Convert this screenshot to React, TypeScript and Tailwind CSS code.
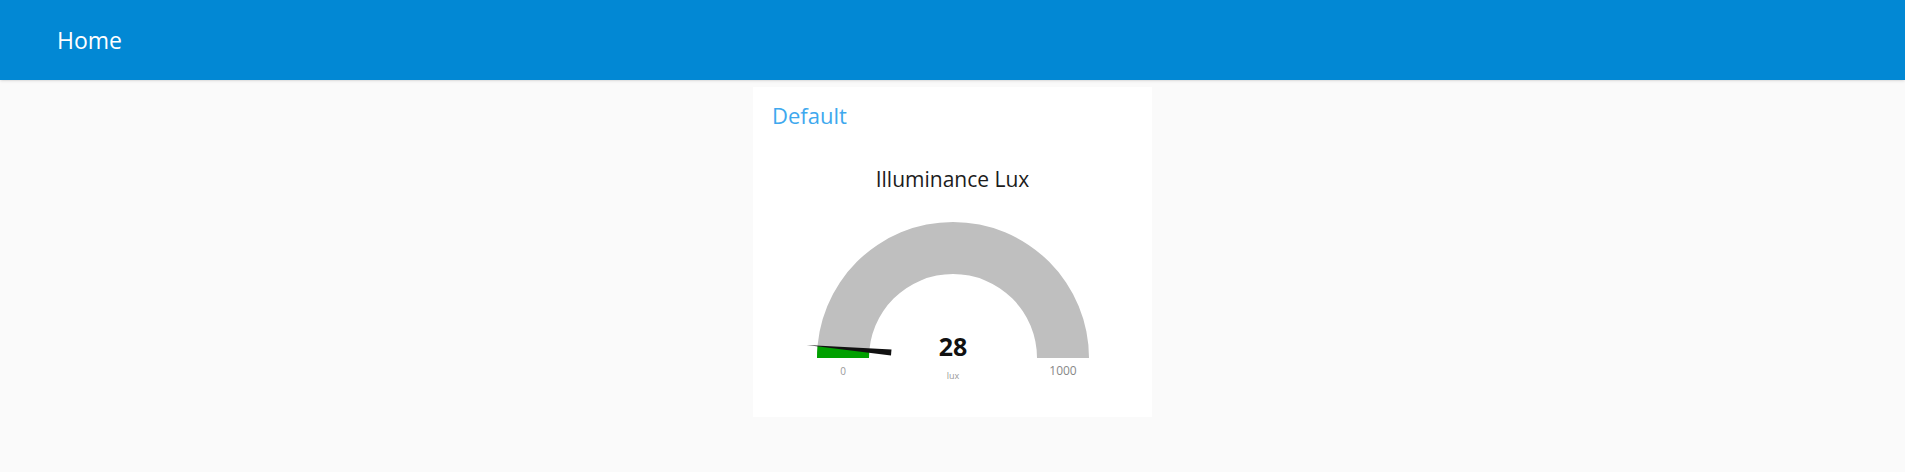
import React from 'react';

const Gauge: React.FC<{ value: number; min: number; max: number; units: string }> = ({ value, min, max, units }) => {
  const cx = 200;
  const cy = 164;
  const ro = 136;
  const ri = 84;
  const a = ((value - min) / (max - min)) * Math.PI;
  const ox = cx - ro * Math.cos(a);
  const oy = cy - ro * Math.sin(a);
  const ix = cx - ri * Math.cos(a);
  const iy = cy - ri * Math.sin(a);

  // needle: thin tip outside the arc, wide base toward the middle
  const dx = -Math.cos(a);
  const dy = -Math.sin(a);
  const tip = [cx + dx * 147, cy + dy * 147];
  const base = [cx + dx * 62, cy + dy * 62];
  const px = -dy * 3;
  const py = dx * 3;

  return (
    <svg width="399" height="200" viewBox="0 0 399 200" className="block">
      <path
        d={`M ${cx - ro} ${cy} A ${ro} ${ro} 0 0 1 ${cx + ro} ${cy} L ${cx + ri} ${cy} A ${ri} ${ri} 0 0 0 ${cx - ri} ${cy} Z`}
        fill="#bfbfbf"
      />
      <path
        d={`M ${cx - ro} ${cy} A ${ro} ${ro} 0 0 1 ${ox} ${oy} L ${ix} ${iy} A ${ri} ${ri} 0 0 0 ${cx - ri} ${cy} Z`}
        fill="#00a000"
      />
      <polygon
        points={`${tip[0]},${tip[1]} ${base[0] + px},${base[1] + py} ${base[0] - px},${base[1] - py}`}
        fill="#111"
      />
      <text x={cx} y={162} textAnchor="middle" fontSize="25" fontWeight="700" fill="#111" fontFamily="'Open Sans', sans-serif">
        {value}
      </text>
      <text x={cx} y={185} textAnchor="middle" fontSize="9" fill="#999" fontFamily="'Open Sans', sans-serif">
        {units}
      </text>
      <text x={cx - (ro + ri) / 2} y={181} textAnchor="middle" fontSize="10" fill="#999" fontFamily="'Open Sans', sans-serif">
        {min}
      </text>
      <text x={cx + (ro + ri) / 2} y={181} textAnchor="middle" fontSize="12" fill="#888" fontFamily="'Open Sans', sans-serif">
        {max}
      </text>
    </svg>
  );
};

const App: React.FC = () => {
  return (
    <div className="min-h-[472px] bg-[#fafafa] font-['Open_Sans',sans-serif]">
      {/* Toolbar */}
      <div className="h-[80px] bg-[#0288d4] flex items-center pl-[57px] shadow-sm">
        <span className="text-white text-[23px] leading-none font-medium">Home</span>
      </div>

      {/* Group card */}
      <div className="flex justify-center pt-[7px]">
        <div className="w-[399px] h-[330px] bg-white">
          <div className="pt-[13px] pl-[19px] text-[22px] leading-[30px] font-medium text-[#3ea8ee]">Default</div>
          <div className="mt-[35px] text-center text-[21px] leading-[28px] text-[#1c1c1c]">Illuminance Lux</div>
          <div className="mt-[1px]">
            <Gauge value={28} min={0} max={1000} units="lux" />
          </div>
        </div>
      </div>
    </div>
  );
};

export default App;
